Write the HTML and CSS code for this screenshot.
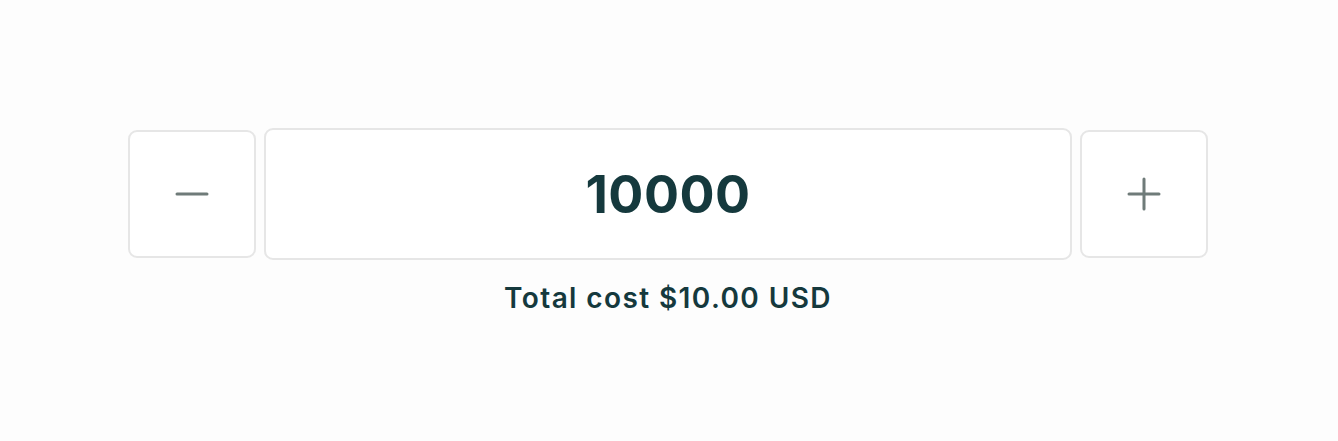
FILE: index.html
```html
<!DOCTYPE html>
<html lang="en">

<head>
    <meta charset="UTF-8">
    <meta name="viewport" content="width=device-width, initial-scale=1.0">
    <title>Quantity</title>
    <link rel="stylesheet" href="styles.css">
</head>

<body>
    <div class="stepper">
        <div class="stepper-row">
            <button class="step-btn minus-btn" aria-label="Decrease">
                <svg width="34" height="34" viewBox="0 0 34 34">
                    <line x1="2" y1="17" x2="32" y2="17" stroke="#6f7b79" stroke-width="3" stroke-linecap="round" />
                </svg>
            </button>
            <input class="qty-input" type="text" value="10000">
            <button class="step-btn plus-btn" aria-label="Increase">
                <svg width="34" height="34" viewBox="0 0 34 34">
                    <line x1="2" y1="17" x2="32" y2="17" stroke="#6f7b79" stroke-width="3" stroke-linecap="round" />
                    <line x1="17" y1="2" x2="17" y2="32" stroke="#6f7b79" stroke-width="3" stroke-linecap="round" />
                </svg>
            </button>
        </div>
        <p class="total">Total cost $10.00 USD</p>
    </div>
</body>

</html>
```

FILE: styles.css
```css
body {
    margin: 0;
    background-color: #fdfdfd;
    font-family: Inter, "Noto Sans", sans-serif;
    color: #15393d;
}

.stepper {
    display: flex;
    flex-direction: column;
    align-items: center;
    padding: 128px 2px 0 0;
}

.stepper-row {
    display: flex;
    align-items: center;
    gap: 8px;
}

.step-btn {
    width: 128px;
    height: 128px;
    display: flex;
    justify-content: center;
    align-items: center;
    background-color: #fff;
    border: 2px solid #e6e6e6;
    border-radius: 9px;
    padding: 0;
    cursor: pointer;
}

.qty-input {
    box-sizing: border-box;
    width: 808px;
    height: 132px;
    border: 2px solid #e6e6e6;
    border-radius: 9px;
    background-color: #fff;
    text-align: center;
    font-family: Inter, "Noto Sans", sans-serif;
    font-size: 52px;
    font-weight: 700;
    letter-spacing: 0.5px;
    color: #15393d;
    outline: none;
}

.total {
    margin: 21px 0 0;
    font-size: 28px;
    font-weight: 600;
    letter-spacing: 1.4px;
}
```
